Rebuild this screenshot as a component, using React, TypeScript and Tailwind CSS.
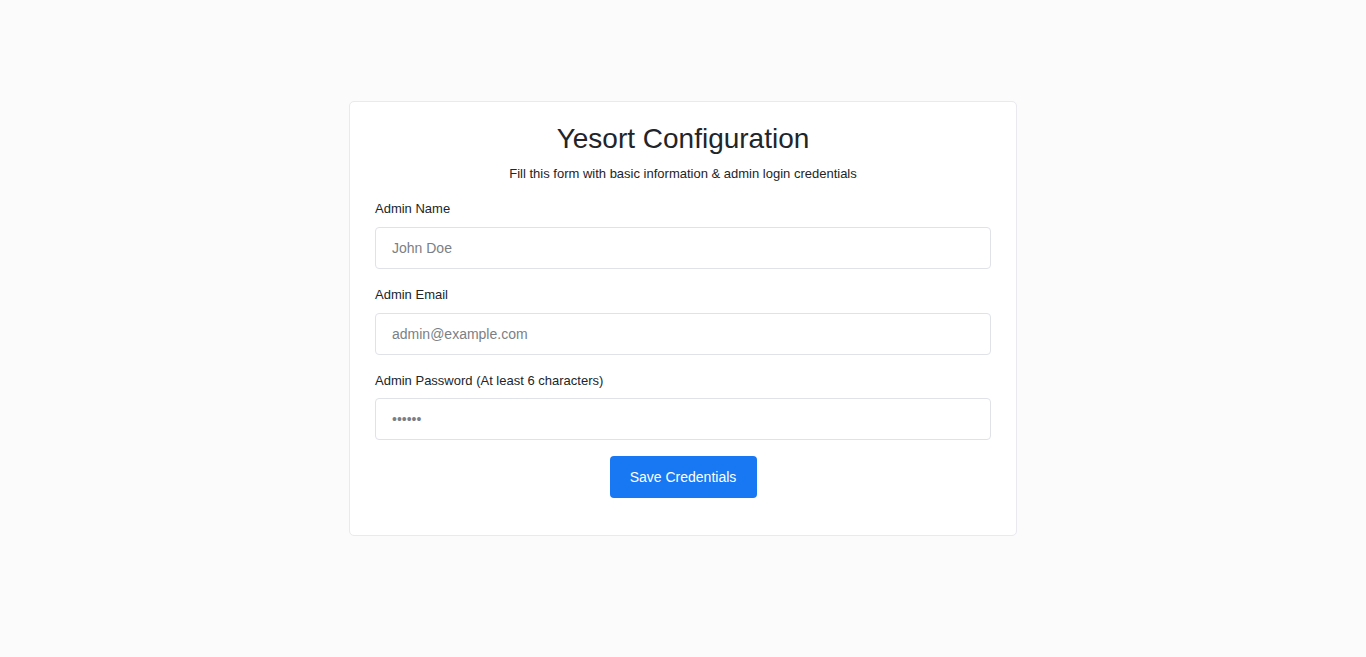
export default function App() {
  return (
    <div
      className="min-h-[657px] w-full bg-[#fbfbfc] pt-[101px] text-[#212529]"
      style={{ fontFamily: '"Liberation Sans", Arial, sans-serif' }}
    >
      <div className="mx-auto w-[668px] rounded-[5px] border border-[#e9e9ef] bg-white px-[25px] pt-[20px] pb-[37px]">
        <h1 className="text-center text-[28px] leading-[34px] text-[#212529]">Yesort Configuration</h1>
        <p className="mt-[9px] text-center text-[13px] leading-[18px]">
          Fill this form with basic information &amp; admin login credentials
        </p>

        <form className="mt-[17px]" onSubmit={(e) => e.preventDefault()}>
          <div>
            <label className="block text-[13px] leading-[18px]">Admin Name</label>
            <input
              type="text"
              placeholder="John Doe"
              className="mt-[9px] block h-[42px] w-full rounded-[4px] border border-[#dfe2e8] px-[16px] text-[14px] outline-none placeholder:text-[#7b7f85]"
            />
          </div>
          <div className="mt-[17px]">
            <label className="block text-[13px] leading-[18px]">Admin Email</label>
            <input
              type="email"
              placeholder="admin@example.com"
              className="mt-[9px] block h-[42px] w-full rounded-[4px] border border-[#dfe2e8] px-[16px] text-[14px] outline-none placeholder:text-[#7b7f85]"
            />
          </div>
          <div className="mt-[17px]">
            <label className="block text-[13px] leading-[18px]">Admin Password (At least 6 characters)</label>
            <input
              type="password"
              placeholder="••••••"
              className="mt-[8px] block h-[42px] w-full rounded-[4px] border border-[#dfe2e8] px-[16px] text-[14px] outline-none placeholder:text-[#7b7f85]"
            />
          </div>
          <div className="mt-[16px] flex justify-center">
            <button
              type="submit"
              className="h-[42px] w-[147px] rounded-[4px] bg-[#1877f2] text-[14px] text-white"
            >
              Save Credentials
            </button>
          </div>
        </form>
      </div>
    </div>
  )
}
